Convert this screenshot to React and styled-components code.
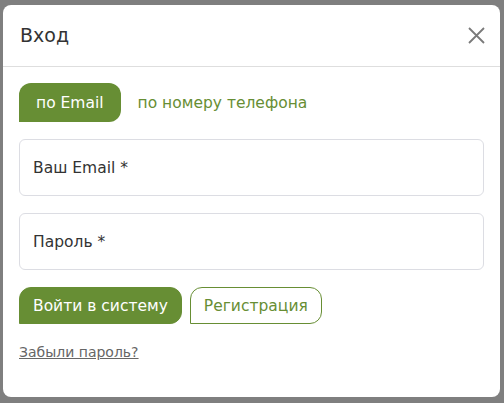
import styled, { createGlobalStyle } from "styled-components"

const GlobalStyle = createGlobalStyle`
    html, body {
        margin: 0;
        padding: 0;
        background: #7f7f7f;
        font-family: 'DejaVu Sans', 'Noto Sans', sans-serif;
    }
    * { box-sizing: border-box; }
`

const green = "#678e34"

export default function App() {
    return (
        <>
            <GlobalStyle />
            <Backdrop>
                <Modal>
                    <Header>
                        <Title>Вход</Title>
                        <CloseButton aria-label="close">
                            <svg width="17" height="17" viewBox="0 0 17 17">
                                <path d="M1 1 L16 16 M16 1 L1 16" stroke="#7a7a7a" strokeWidth="1.8" fill="none" />
                            </svg>
                        </CloseButton>
                    </Header>
                    <Body>
                        <Tabs>
                            <Tab active>по Email</Tab>
                            <Tab>по номеру телефона</Tab>
                        </Tabs>
                        <Field>Ваш Email *</Field>
                        <Field>Пароль *</Field>
                        <Actions>
                            <Button primary>Войти в систему</Button>
                            <Button>Регистрация</Button>
                        </Actions>
                        <Forgot href="#">Забыли пароль?</Forgot>
                    </Body>
                </Modal>
            </Backdrop>
        </>
    )
}

const Backdrop = styled.div`
    width: 504px;
    height: 403px;
    padding: 5px 4px 6px 3px;
`
const Modal = styled.div`
    background: #fff;
    border-radius: 8px;
    height: 100%;
    display: flex;
    flex-direction: column;
`
const Header = styled.div`
    height: 62px;
    display: flex;
    align-items: center;
    justify-content: space-between;
    padding: 0 15px 0 17px;
    border-bottom: 1px solid #dedede;
`
const Title = styled.h2`
    margin: 0;
    font-size: 19px;
    font-weight: 400;
    color: #333;
    padding-bottom: 2px;
`
const CloseButton = styled.button`
    border: none;
    background: none;
    padding: 0;
    display: flex;
    cursor: pointer;
`
const Body = styled.div`
    padding: 16px 16px 0 16px;
    display: flex;
    flex-direction: column;
`
const Tabs = styled.div`
    display: flex;
    align-items: center;
    margin-bottom: 17px;
`
const Tab = styled.button`
    height: 39px;
    padding: 0 17px;
    border: none;
    border-radius: 12px 12px 12px 0;
    font-family: inherit;
    font-size: 15.5px;
    background: ${p => p.active ? green : "transparent"};
    color: ${p => p.active ? "#fff" : green};
    cursor: pointer;
`
const Field = styled.div`
    height: 57px;
    border: 1px solid #dcdde3;
    border-radius: 6px;
    display: flex;
    align-items: center;
    padding: 0 13px;
    font-size: 15.5px;
    color: #333;
    margin-bottom: 17px;
`
const Actions = styled.div`
    display: flex;
    gap: 8px;
    margin-bottom: 20px;
`
const Button = styled.button`
    height: 37px;
    padding: 0 13px;
    border-radius: 12px 12px 12px 0;
    border: 1px solid ${green};
    font-family: inherit;
    font-size: 15.5px;
    background: ${p => p.primary ? green : "#fff"};
    color: ${p => p.primary ? "#fff" : green};
    cursor: pointer;
`
const Forgot = styled.a`
    align-self: flex-start;
    font-size: 14px;
    color: #666;
    text-decoration: underline;
`
